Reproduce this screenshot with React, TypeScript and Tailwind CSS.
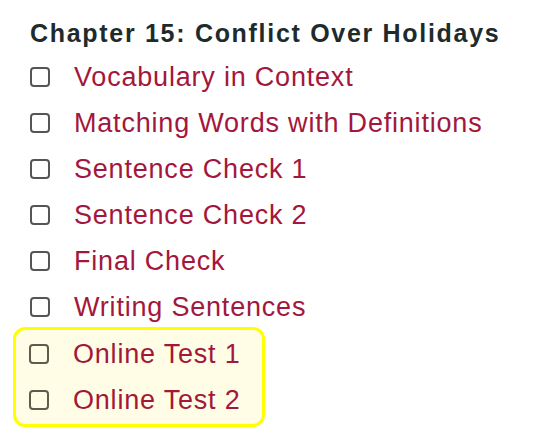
import React from "react";

const items = [
  "Vocabulary in Context",
  "Matching Words with Definitions",
  "Sentence Check 1",
  "Sentence Check 2",
  "Final Check",
  "Writing Sentences",
];

const tests = ["Online Test 1", "Online Test 2"];

const Row: React.FC<{ label: string; boxColor?: string }> = ({ label, boxColor }) => (
  <li className="flex items-center h-[46px]">
    <span className={`w-[20px] h-[20px] border-2 rounded-[4px] shrink-0 ${boxColor ?? "border-[#555]"}`} />
    <span className="ml-[24px] text-[27px] tracking-[0.8px] text-[#a3173c] leading-none">{label}</span>
  </li>
);

const App: React.FC = () => {
  return (
    <div
      className="w-[560px] h-[431px] bg-white pt-[18px] pl-[30px]"
      style={{ fontFamily: '"Liberation Sans", Arial, sans-serif' }}
    >
      <h2 className="text-[25px] font-bold tracking-[1.7px] text-[#1e2b2d] leading-[30px]">
        Chapter 15: Conflict Over Holidays
      </h2>
      <ul className="mt-[6px]">
        {items.map((t) => (
          <Row key={t} label={t} />
        ))}
      </ul>
      <ul className="ml-[-17px] mt-[-3px] w-[252px] pl-[13px] py-[1px] border-[3px] border-[#ffff00] bg-[#fffde6] rounded-[12px]">
        {tests.map((t) => (
          <Row key={t} label={t} boxColor="border-[#5e5c4c]" />
        ))}
      </ul>
    </div>
  );
};

export default App;
